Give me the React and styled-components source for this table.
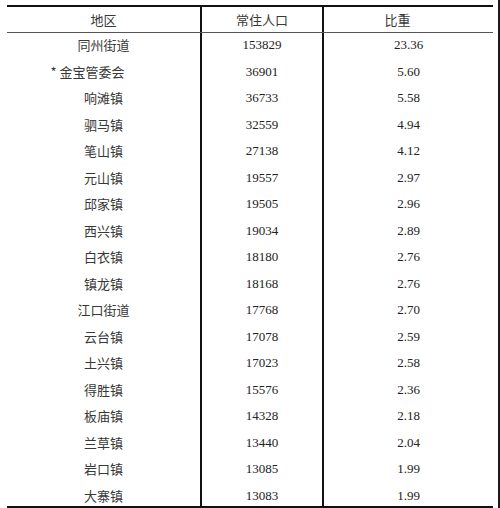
import React from 'react';
import styled, { createGlobalStyle } from 'styled-components';

const GlobalStyle = createGlobalStyle`
    html, body {
        margin: 0;
        padding: 0;
        background: #fff;
    }
`;

const rows = [
    ['同州街道', '153829', '23.36'],
    ['* 金宝管委会', '36901', '5.60', 32],
    ['响滩镇', '36733', '5.58'],
    ['驷马镇', '32559', '4.94'],
    ['笔山镇', '27138', '4.12'],
    ['元山镇', '19557', '2.97'],
    ['邱家镇', '19505', '2.96'],
    ['西兴镇', '19034', '2.89'],
    ['白衣镇', '18180', '2.76'],
    ['镇龙镇', '18168', '2.76'],
    ['江口街道', '17768', '2.70'],
    ['云台镇', '17078', '2.59'],
    ['土兴镇', '17023', '2.58'],
    ['得胜镇', '15576', '2.36'],
    ['板庙镇', '14328', '2.18'],
    ['兰草镇', '13440', '2.04'],
    ['岩口镇', '13085', '1.99'],
    ['大寨镇', '13083', '1.99'],
];

const Page = styled.div`
    box-sizing: border-box;
    width: 500px;
    height: 508px;
    padding: 5px 5px 0 7px;
    border-right: 2px solid #1c1c1c;
    overflow: hidden;
`;

const Table = styled.div`
    display: flex;
    flex-direction: column;
    border-top: 2px solid #111;
    border-bottom: 2px solid #111;
`;

const Row = styled.div`
    display: grid;
    grid-template-columns: 193px 122px 1fr;
    height: ${p => p.$height}px;
    border-bottom: ${p => (p.$head ? '1px solid #555' : 'none')};
`;

const Cell = styled.div`
    box-sizing: border-box;
    display: flex;
    justify-content: center;
    align-items: ${p => (p.$head ? 'center' : 'flex-start')};
    padding-right: ${p => p.$shift || 0}px;
    border-left: ${p => (p.$divider ? '2px solid #111' : 'none')};
    line-height: 24px;
    font-size: 13px;
    white-space: pre;
    font-family: ${p => (p.$num
        ? '"Liberation Serif", "Times New Roman", serif'
        : '"Noto Sans CJK SC", "Noto Sans", sans-serif')};
    color: ${p => (p.$num ? '#222' : '#383838')};
`;

function App() {
    return (
        <>
            <GlobalStyle />
            <Page>
                <Table>
                    <Row $head $height={25}>
                        <Cell $head>地区</Cell>
                        <Cell $head $divider>常住人口</Cell>
                        <Cell $head $divider $shift={22}>比重</Cell>
                    </Row>
                    {rows.map(([name, people, share, shift], index) =>
                        <Row key={name} $height={index === rows.length - 1 ? 22.5 : 26.5}>
                            <Cell $shift={shift}>{name}</Cell>
                            <Cell $num $divider>{people}</Cell>
                            <Cell $num $divider>{share}</Cell>
                        </Row>
                    )}
                </Table>
            </Page>
        </>
    );
}

export default App;
